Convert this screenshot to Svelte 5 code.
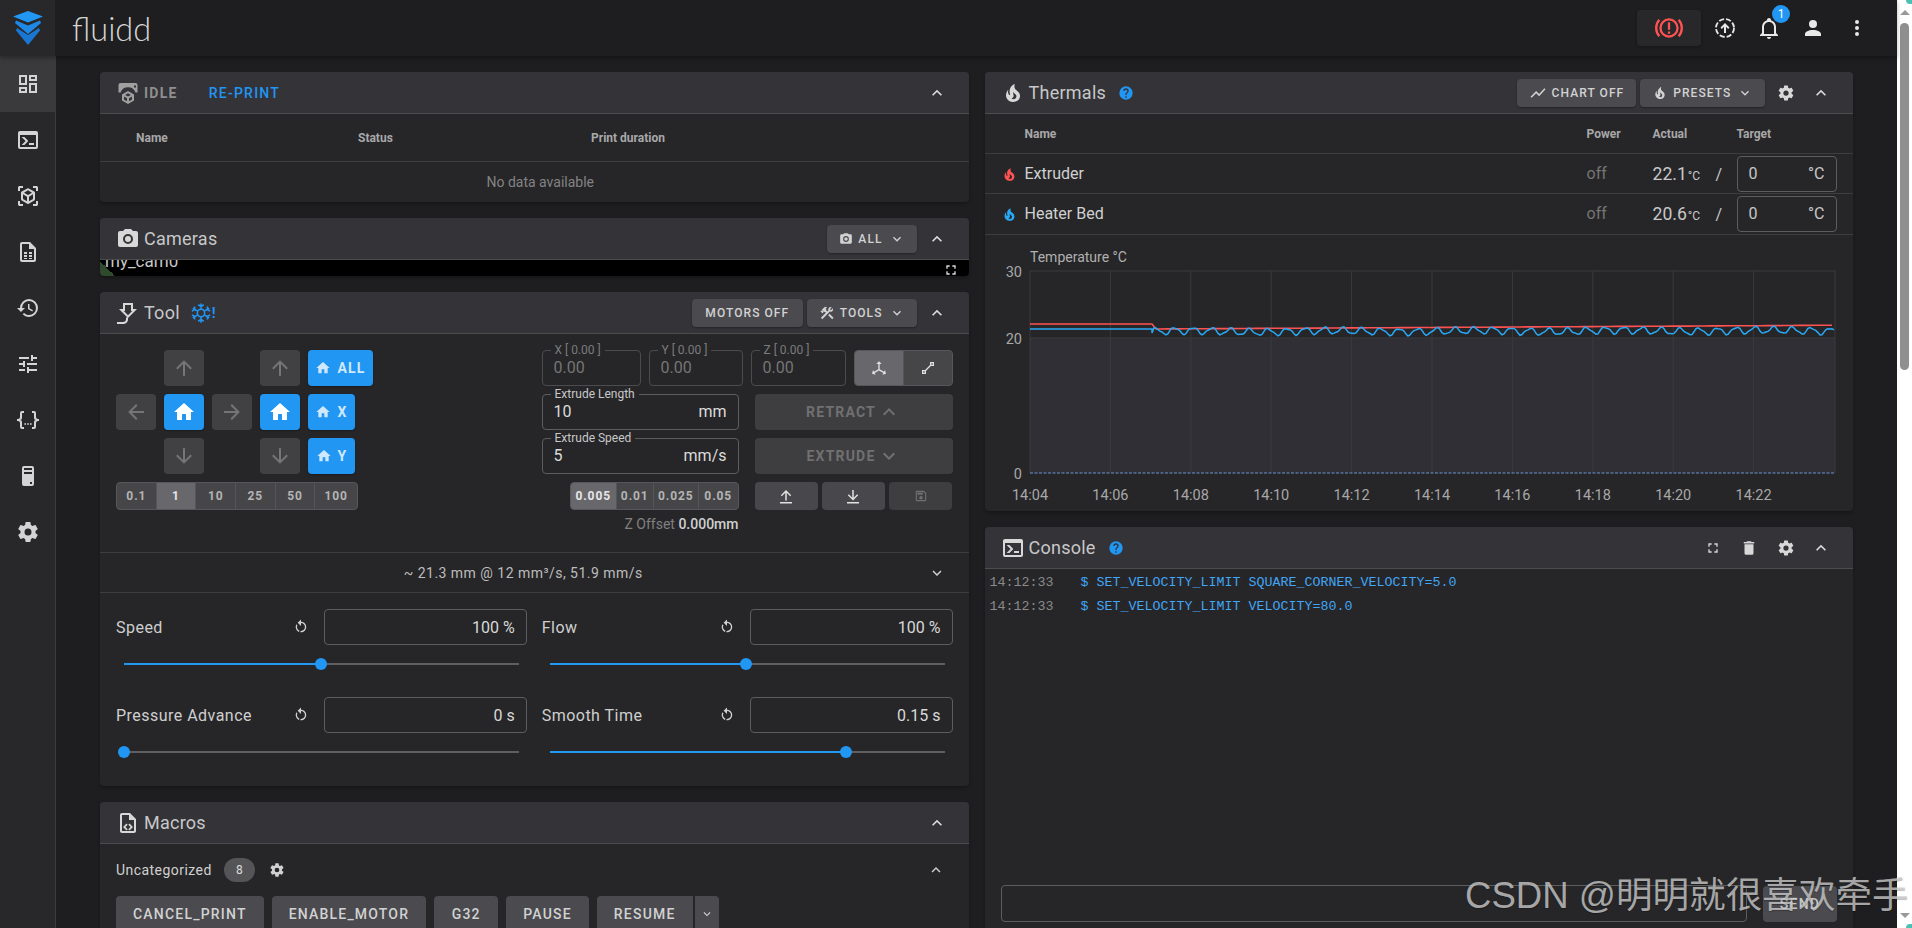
<script>
  const P = {
    dash: 'M19,5V7H15V5H19M9,5V11H5V5H9M19,13V19H15V13H19M9,17V19H5V17H9M21,3H13V9H21V3M11,3H3V13H11V3M21,11H13V21H21V11M11,15H3V21H11V15Z',
    console: 'M20,19V7H4V19H20M20,3A2,2 0 0,1 22,5V19A2,2 0 0,1 20,21H4A2,2 0 0,1 2,19V5C2,3.89 2.9,3 4,3H20M13,17V15H18V17H13M9.58,13L5.57,9H8.4L11.7,12.3C12.09,12.69 12.09,13.33 11.7,13.72L8.42,17H5.59L9.58,13Z',
    cube: 'M17,22V20H20V17H22V20.5C22,20.89 21.84,21.24 21.54,21.54C21.24,21.84 20.89,22 20.5,22H17M7,22H3.5C3.11,22 2.76,21.84 2.46,21.54C2.16,21.24 2,20.89 2,20.5V17H4V20H7V22M17,2H20.5C20.89,2 21.24,2.16 21.54,2.46C21.84,2.76 22,3.11 22,3.5V7H20V4H17V2M7,2V4H4V7H2V3.5C2,3.11 2.16,2.76 2.46,2.46C2.76,2.16 3.11,2 3.5,2H7M13,17.25L17,14.95V10.36L13,12.66V17.25M12,10.92L16,8.63L12,6.28L8,8.63L12,10.92M7,14.95L11,17.25V12.66L7,10.36V14.95M18.23,7.59C18.73,7.91 19,8.34 19,8.91V15.23C19,15.8 18.73,16.23 18.23,16.55L12.75,19.73C12.25,20.05 11.75,20.05 11.25,19.73L5.77,16.55C5.27,16.23 5,15.8 5,15.23V8.91C5,8.34 5.27,7.91 5.77,7.59L11.25,4.41C11.5,4.28 11.75,4.22 12,4.22C12.25,4.22 12.5,4.28 12.75,4.41L18.23,7.59Z',
    file: 'M14,2H6C4.9,2 4,2.9 4,4V20C4,21.1 4.9,22 6,22H18C19.1,22 20,21.1 20,20V8L14,2M18,20H6V4H13V9H18V20M8,12H11V14H8V12M13,12H16V14H13V12M8,15H11V17H8V15M13,15H16V17H13V15M8,18H11V19H8V18M13,18H16V19H13V18Z',
    history: 'M13.5,8H12V13L16.28,15.54L17,14.33L13.5,12.25V8M13,3A9,9 0 0,0 4,12H1L4.96,16.03L9,12H6A7,7 0 0,1 13,5A7,7 0 0,1 20,12A7,7 0 0,1 13,19C11.07,19 9.32,18.21 8.06,16.94L6.64,18.36C8.27,20 10.5,21 13,21A9,9 0 0,0 22,12A9,9 0 0,0 13,3',
    tune: 'M3,17V19H9V17H3M3,5V7H13V5H3M13,21V19H21V17H13V15H11V21H13M7,9V11H3V13H7V15H9V9H7M21,13V11H11V13H21M15,9H17V7H21V5H17V3H15V9Z',
    braces: 'M6,3A2,2 0 0,0 4,5V9A2,2 0 0,1 2,11H1V13H2A2,2 0 0,1 4,15V19A2,2 0 0,0 6,21H8V19H6V14A2,2 0 0,0 4,12A2,2 0 0,0 6,10V5H8V3M18,3A2,2 0 0,1 20,5V9A2,2 0 0,0 22,11H23V13H22A2,2 0 0,0 20,15V19A2,2 0 0,1 18,21H16V19H18V14A2,2 0 0,1 20,12A2,2 0 0,1 18,10V5H16V3H18M8.4,15.2H10V16.8H8.4V15.2M11.2,15.2H12.8V16.8H11.2V15.2M14,15.2H15.6V16.8H14V15.2Z',
    tower: 'M8,2H16A2,2 0 0,1 18,4V20A2,2 0 0,1 16,22H8A2,2 0 0,1 6,20V4A2,2 0 0,1 8,2M8,4V6H16V4H8M16,8H8V10H16V8M16,18H14V20H16V18Z',
    cog: 'M12,15.5A3.5,3.5 0 0,1 8.5,12A3.5,3.5 0 0,1 12,8.5A3.5,3.5 0 0,1 15.5,12A3.5,3.5 0 0,1 12,15.5M19.43,12.97C19.47,12.65 19.5,12.33 19.5,12C19.5,11.67 19.47,11.34 19.43,11L21.54,9.37C21.73,9.22 21.78,8.95 21.66,8.73L19.66,5.27C19.54,5.05 19.27,4.96 19.05,5.05L16.56,6.05C16.04,5.66 15.5,5.32 14.87,5.07L14.5,2.42C14.46,2.18 14.25,2 14,2H10C9.75,2 9.54,2.18 9.5,2.42L9.13,5.07C8.5,5.32 7.96,5.66 7.44,6.05L4.95,5.05C4.73,4.96 4.46,5.05 4.34,5.27L2.34,8.73C2.21,8.95 2.27,9.22 2.46,9.37L4.57,11C4.53,11.34 4.5,11.67 4.5,12C4.5,12.33 4.53,12.65 4.57,12.97L2.46,14.63C2.27,14.78 2.21,15.05 2.34,15.27L4.34,18.73C4.46,18.95 4.73,19.03 4.95,18.95L7.44,17.94C7.96,18.34 8.5,18.68 9.13,18.93L9.5,21.58C9.54,21.82 9.75,22 10,22H14C14.25,22 14.46,21.82 14.5,21.58L14.87,18.93C15.5,18.67 16.04,18.34 16.56,17.94L19.05,18.95C19.27,19.03 19.54,18.95 19.66,18.73L21.66,15.27C21.78,15.05 21.73,14.78 21.54,14.63L19.43,12.97Z',
    up: 'M7.41,15.41L12,10.83L16.59,15.41L18,14L12,8L6,14L7.41,15.41Z',
    down: 'M7.41,8.58L12,13.17L16.59,8.58L18,10L12,16L6,10L7.41,8.58Z',
    camera: 'M4,4H7L9,2H15L17,4H20A2,2 0 0,1 22,6V18A2,2 0 0,1 20,20H4A2,2 0 0,1 2,18V6A2,2 0 0,1 4,4M12,7A5,5 0 0,0 7,12A5,5 0 0,0 12,17A5,5 0 0,0 17,12A5,5 0 0,0 12,7M12,9A3,3 0 0,1 15,12A3,3 0 0,1 12,15A3,3 0 0,1 9,12A3,3 0 0,1 12,9Z',
    fire: 'M17.66 11.2C17.43 10.9 17.15 10.64 16.89 10.38C16.22 9.78 15.46 9.35 14.82 8.72C13.33 7.26 13 4.85 13.95 3C13 3.23 12.17 3.75 11.46 4.32C8.87 6.4 7.85 10.07 9.07 13.22C9.11 13.32 9.15 13.42 9.15 13.55C9.15 13.77 9 13.97 8.8 14.05C8.57 14.15 8.33 14.09 8.14 13.93C8.08 13.88 8.04 13.83 8 13.76C6.87 12.33 6.69 10.28 7.45 8.64C5.78 10 4.87 12.3 5 14.47C5.06 14.97 5.12 15.47 5.29 15.97C5.43 16.57 5.7 17.17 6 17.7C7.08 19.43 8.95 20.67 10.96 20.92C13.1 21.19 15.39 20.8 17.03 19.32C18.86 17.66 19.5 15 18.56 12.72L18.43 12.46C18.22 12 17.66 11.2 17.66 11.2M14.5 17.5C14.22 17.74 13.76 18 13.4 18.1C12.28 18.5 11.16 17.94 10.5 17.28C11.69 17 12.4 16.12 12.61 15.23C12.78 14.43 12.46 13.77 12.33 13C12.21 12.26 12.23 11.63 12.5 10.94C12.69 11.32 12.89 11.7 13.13 12C13.9 13 15.11 13.44 15.37 14.8C15.41 14.94 15.43 15.08 15.43 15.23C15.46 16.05 15.1 16.95 14.5 17.5H14.5Z',
    help: 'M15.07,11.25L14.17,12.17C13.45,12.89 13,13.5 13,15H11V14.5C11,13.39 11.45,12.39 12.17,11.67L13.41,10.41C13.78,10.05 14,9.55 14,9C14,7.89 13.1,7 12,7A2,2 0 0,0 10,9H8A4,4 0 0,1 12,5A4,4 0 0,1 16,9C16,9.88 15.64,10.67 15.07,11.25M13,19H11V17H13M12,2A10,10 0 0,0 2,12A10,10 0 0,0 12,22A10,10 0 0,0 22,12C22,6.47 17.5,2 12,2Z',
    chart: 'M3.5,18.49L9.5,12.48L13.5,16.48L22,6.92L20.59,5.51L13.5,13.48L9.5,9.48L2,16.99L3.5,18.49Z',
    hammer: 'M13.78 15.3L19.78 21.3L21.89 19.14L15.89 13.14L13.78 15.3M17.5 10.1C17.11 10.1 16.69 10.05 16.36 9.91L4.97 21.25L2.86 19.14L10.27 11.74L8.5 9.96L7.78 10.66L6.33 9.25V12.11L5.63 12.81L2.11 9.25L2.81 8.55H5.62L4.22 7.14L7.78 3.58C8.95 2.41 10.83 2.41 12 3.58L9.89 5.74L11.3 7.14L10.59 7.85L12.38 9.63L14.2 7.75C14.06 7.42 14 7 14 6.63C14 4.66 15.56 3.11 17.5 3.11C18.09 3.11 18.61 3.25 19.08 3.53L16.41 6.2L17.91 7.7L20.58 5.03C20.86 5.5 21 6 21 6.63C21 8.55 19.45 10.1 17.5 10.1Z',
    home: 'M10,20V14H14V20H19V12H22L12,3L2,12H5V20H10Z',
    aup: 'M13,20H11V8L5.5,13.5L4.08,12.08L12,4.16L19.92,12.08L18.5,13.5L13,8V20Z',
    adown: 'M11,4H13V16L18.5,10.5L19.92,11.92L12,19.84L4.08,11.92L5.5,10.5L11,16V4Z',
    aleft: 'M20,11V13H8L13.5,18.5L12.08,19.92L4.16,12L12.08,4.08L13.5,5.5L8,11H20Z',
    aright: 'M4,11V13H16L10.5,18.5L11.92,19.92L19.84,12L11.92,4.08L10.5,5.5L16,11H4Z',
    bell: 'M10 21H14C14 22.1 13.1 23 12 23S10 22.1 10 21M21 19V20H3V19L5 17V11C5 7.9 7 5.2 10 4.3V4C10 2.9 10.9 2 12 2S14 2.9 14 4V4.3C17 5.2 19 7.9 19 11V17L21 19M17 11C17 8.2 14.8 6 12 6S7 8.2 7 11V18H17V11Z',
    account: 'M12,4A4,4 0 0,1 16,8A4,4 0 0,1 12,12A4,4 0 0,1 8,8A4,4 0 0,1 12,4M12,14C16.42,14 20,15.79 20,18V20H4V18C4,15.79 7.58,14 12,14Z',
    dots: 'M12,16A2,2 0 0,1 14,18A2,2 0 0,1 12,20A2,2 0 0,1 10,18A2,2 0 0,1 12,16M12,10A2,2 0 0,1 14,12A2,2 0 0,1 12,14A2,2 0 0,1 10,12A2,2 0 0,1 12,10M12,4A2,2 0 0,1 14,6A2,2 0 0,1 12,8A2,2 0 0,1 10,6A2,2 0 0,1 12,4Z',
    reset: 'M12 4C14.1 4 16.1 4.8 17.6 6.3C20.7 9.4 20.7 14.5 17.6 17.6C15.8 19.5 13.3 20.2 10.9 19.9L11.4 17.9C13.1 18.1 14.9 17.5 16.2 16.2C18.5 13.9 18.5 10.1 16.2 7.7C15.1 6.6 13.5 6 12 6V10.6L7 5.6L12 .6V4M6.3 17.6C3.7 15 3.3 11 5.1 7.9L6.6 9.4C5.5 11.6 5.9 14.4 7.8 16.2C8.3 16.7 8.9 17.1 9.6 17.4L9 19.4C8 19 7.1 18.4 6.3 17.6Z',
    full: 'M5,5H10V7H7V10H5V5M14,5H19V10H17V7H14V5M17,14H19V19H14V17H17V14M10,17V19H5V14H7V17H10Z',
    del: 'M19,4H15.5L14.5,3H9.5L8.5,4H5V6H19M6,19A2,2 0 0,0 8,21H16A2,2 0 0,0 18,19V7H6V19Z',
    axis: 'M12,2L16,6H13V13.85L19.53,17.61L21,15.03L22.5,20.5L17,21.96L18.53,19.35L12,15.58L5.47,19.35L7,21.96L1.5,20.5L3,15.03L4.47,17.61L11,13.85V6H8L12,2Z',
    vector: 'M15,3V7.59L7.59,15H3V21H9V16.42L16.42,9H21V3M17,5H19V7H17M5,17H7V19H5',
    upbar: 'M13 7.83V18H11V7.83L6.5 12.33L5.08 10.92L12 4L18.92 10.92L17.5 12.33L13 7.83M4 20H20V22H4Z',
    downbar: 'M11 4H13V14.17L17.5 9.67L18.92 11.08L12 18L5.08 11.08L6.5 9.67L11 14.17V4M4 20H20V22H4Z',
    save: 'M17 3H5C3.89 3 3 3.9 3 5V19C3 20.1 3.89 21 5 21H19C20.1 21 21 20.1 21 19V7L17 3M19 19H5V5H16.17L19 7.83V19M12 12C10.34 12 9 13.34 9 15S10.34 18 12 18 15 16.66 15 15 13.66 12 12 12M6 6H15V10H6V6Z',
    macro: 'M14,2H6C4.9,2 4,2.9 4,4V20C4,21.1 4.9,22 6,22H18C19.1,22 20,21.1 20,20V8L14,2M18,20H6V4H13V9H18V20M10.5,12.5L11.7,13.7L9.4,16L11.7,18.3L10.5,19.5L7,16L10.5,12.5M13.5,12.5L17,16L13.5,19.5L12.3,18.3L14.6,16L12.3,13.7L13.5,12.5Z',
    nozzle: 'M7 2H17V8H21L12 17L3 8H7V2M9 4V10H7.8L12 14.2L16.2 10H15V4H9M1 21H7C8.7 21 10 20 10 18.5V16.5H12V18.5C12 21.2 9.8 23 7 23H1V21Z',
    idle: 'M4.5 2H19.5A2 2 0 0 1 21.5 4V11.5H19.5A8 8 0 0 0 4.5 11.5H2.5V4A2 2 0 0 1 4.5 2ZM18 4.5V6.5H20V4.5ZM12 10L18 13.4V19.6L12 23L6 19.6V13.4L12 10M12 12.3L9.2 13.9L12 15.5L14.8 13.9L12 12.3M8 15.6V18.5L11 20.2V17.3L8 15.6M16 15.6L13 17.3V20.2L16 18.5V15.6Z',
    upload: 'M12 7L7.5 11.5L8.9 12.9L11 10.8V17H13V10.8L15.1 12.9L16.5 11.5L12 7Z',
  };

  const nav = [P.dash, P.console, P.cube, P.file, P.history, P.tune, P.braces, P.tower, P.cog];
  const moveSteps = ['0.1', '1', '10', '25', '50', '100'];
  const zSteps = ['0.005', '0.01', '0.025', '0.05'];
  const sliders = [
    { label: 'Speed', value: '100 %', pct: 49.8 },
    { label: 'Flow', value: '100 %', pct: 49.8 },
    { label: 'Pressure Advance', value: '0 s', pct: 0 },
    { label: 'Smooth Time', value: '0.15 s', pct: 75 },
  ];
  const macros = ['CANCEL_PRINT', 'ENABLE_MOTOR', 'G32', 'PAUSE'];
  const heaters = [
    { cls: 'red', name: 'Extruder', actual: '22.1' },
    { cls: 'sky', name: 'Heater Bed', actual: '20.6' },
  ];

  // Chart space: origin at the chart block (x 985, y 235)
  const X0 = 45, X1 = 850, Y30 = 36, Y20 = 103, Y0 = 238;
  const step = 80.4;
  const times = ['14:04', '14:06', '14:08', '14:10', '14:12', '14:14', '14:16', '14:18', '14:20', '14:22'];
  const gridX = times.map((_, i) => X0 + i * step);

  const jump = 167;
  let blue = `M${X0} 94 H${jump} V98`;
  let red = `M${X0} 89 H${jump} L${jump + 4} 94`;
  for (let x = jump + 2; x <= X1; x += 2) {
    const t = x - jump;
    const w = Math.sin(t / 2.98 + 0.3) * 3.3 + Math.sin(t / 1.37) * 0.9 + Math.sin(t / 23) * 0.7;
    blue += ` L${x} ${(96.5 - t * 0.0013 - w).toFixed(1)}`;
  }
  for (let x = jump + 8; x <= X1; x += 8) {
    red += ` L${x} ${(94 - (x - jump) * 0.0055).toFixed(1)}`;
  }
</script>

{#snippet ic(d, cls = 'i24')}
  <svg class={cls} viewBox="0 0 24 24" aria-hidden="true"><path d={d} /></svg>
{/snippet}

{#snippet field(label, value, unit, cls = '')}
  <div class="field {cls}">
    <span class="legend">{label}</span>
    <span class="val">{value}</span>
    {#if unit}<span class="unit">{unit}</span>{/if}
  </div>
{/snippet}

<div class="root">
  <div class="page">
    <header class="appbar">
      <div class="brand">
        <svg class="logo" viewBox="0 0 30 34" aria-hidden="true">
          <path d="M15 11.5L30 5.6L15 0L0 5.6Z" fill="#2196f3" />
          <path d="M3 9.5L15 14.5L27 9.5L28 12L15 23L2 12Z" fill="#1e88e5" />
          <path d="M4 17L15 24L26 17L27 19.5L15 34L3 19.5Z" fill="#1976d2" />
        </svg>
      </div>
      <div class="wordmark">fluidd</div>
      <div class="bar-actions">
        <button class="brake" aria-label="Emergency stop">
          <svg class="i26" viewBox="0 0 26 26" aria-hidden="true">
            <circle cx="13" cy="13" r="7.4" class="ring" />
            <path d="M4.6 5.8A11 11 0 0 0 4.6 20.2M21.4 5.8A11 11 0 0 1 21.4 20.2" class="ring" />
            <path d="M12 8H14V14.5H12ZM12 16H14V18H12Z" />
          </svg>
        </button>
        <span class="bar-btn">
          <svg class="i24" viewBox="0 0 24 24" aria-hidden="true">
            <circle cx="12" cy="12" r="9" class="dash" />
            <path d={P.upload} />
          </svg>
        </span>
        <span class="bar-btn">
          {@render ic(P.bell)}
          <span class="badge">1</span>
        </span>
        <span class="bar-btn">{@render ic(P.account)}</span>
        <span class="bar-btn">{@render ic(P.dots)}</span>
      </div>
    </header>

    <div class="content">
      <nav class="sidebar">
        {#each nav as d, i}
          <div class="nav-item" class:active={i === 0}>{@render ic(d)}</div>
        {/each}
      </nav>

      <main class="main">
        <section class="col">
          <article class="card">
            <div class="card-head">
              {@render ic(P.idle, 'i24 muted')}
              <span class="idle">IDLE</span>
              <span class="reprint">RE-PRINT</span>
              <span class="spacer"></span>
              {@render ic(P.up, 'i20 chev')}
            </div>
            <div class="job-row job-head"><span>Name</span><span>Status</span><span>Print duration</span></div>
            <div class="empty">No data available</div>
          </article>

          <article class="card">
            <div class="card-head">
              {@render ic(P.camera, 'i24')}
              <span class="title">Cameras</span>
              <span class="spacer"></span>
              <button class="btn small">{@render ic(P.camera, 'i14')}ALL{@render ic(P.down, 'i16 tail')}</button>
              {@render ic(P.up, 'i20 chev')}
            </div>
            <div class="cam">
              <span class="cam-name">my_cam0</span>
              <span class="cam-corner"></span>
              {@render ic(P.full, 'i16 cam-full')}
            </div>
          </article>

          <article class="card">
            <div class="card-head">
              {@render ic(P.nozzle, 'i24')}
              <span class="title">Tool</span>
              <span class="snow">
                <svg class="i22" viewBox="0 0 24 24" aria-hidden="true">
                  <g class="flake">
                    <circle cx="12" cy="12" r="4" />
                    <path d="M12 8V1.5M12 16V22.5M8.5 10L3 6.8M15.5 14L21 17.2M8.5 14L3 17.2M15.5 10L21 6.8M9 3L12 5L15 3M9 21L12 19L15 21M2 10L5 8.5L5 5M22 14L19 15.5L19 19M2 14L5 15.5L5 19M22 10L19 8.5L19 5" />
                  </g>
                </svg><b>!</b>
              </span>
              <span class="spacer"></span>
              <button class="btn pad">MOTORS OFF</button>
              <button class="btn">{@render ic(P.hammer, 'i16')}TOOLS{@render ic(P.down, 'i16 tail')}</button>
              {@render ic(P.up, 'i20 chev')}
            </div>

            <div class="tool-top">
              <div>
                <div class="jog">
                  <span></span>
                  <span class="jbtn off">{@render ic(P.aup)}</span>
                  <span></span>
                  <span class="jbtn off">{@render ic(P.aup)}</span>
                  <span class="jbtn blue wide">{@render ic(P.home, 'i16')}ALL</span>

                  <span class="jbtn off">{@render ic(P.aleft)}</span>
                  <span class="jbtn blue">{@render ic(P.home)}</span>
                  <span class="jbtn off">{@render ic(P.aright)}</span>
                  <span class="jbtn blue">{@render ic(P.home)}</span>
                  <span class="jbtn blue mid">{@render ic(P.home, 'i16')}X</span>

                  <span></span>
                  <span class="jbtn off">{@render ic(P.adown)}</span>
                  <span></span>
                  <span class="jbtn off">{@render ic(P.adown)}</span>
                  <span class="jbtn blue mid">{@render ic(P.home, 'i16')}Y</span>
                </div>
                <div class="group move">
                  {#each moveSteps as s, i}
                    <span class="cell" class:on={i === 1}>{s}</span>
                  {/each}
                </div>
              </div>

              <div class="ctl">
                <div class="pos-row">
                  {@render field('X [ 0.00 ]', '0.00', '', 'pos px')}
                  {@render field('Y [ 0.00 ]', '0.00', '', 'pos py')}
                  {@render field('Z [ 0.00 ]', '0.00', '', 'pos pz')}
                  <div class="group toggle">
                    <span class="cell on">{@render ic(P.axis, 'i16')}</span>
                    <span class="cell">{@render ic(P.vector, 'i16')}</span>
                  </div>
                </div>
                <div class="ext-row">
                  {@render field('Extrude Length', '10', 'mm')}
                  <span class="wide-off">RETRACT{@render ic(P.up)}</span>
                </div>
                <div class="ext-row">
                  {@render field('Extrude Speed', '5', 'mm/s')}
                  <span class="wide-off">EXTRUDE{@render ic(P.down)}</span>
                </div>
                <div class="ext-row short">
                  <div class="group zstep">
                    {#each zSteps as s, i}
                      <span class="cell" class:on={i === 0}>{s}</span>
                    {/each}
                  </div>
                  <div class="z-btns">
                    <span class="zb">{@render ic(P.upbar, 'i18')}</span>
                    <span class="zb">{@render ic(P.downbar, 'i18')}</span>
                    <span class="zb dim">{@render ic(P.save, 'i14')}</span>
                  </div>
                </div>
                <div class="zoffset"><span>Z Offset</span> <b>0.000mm</b></div>
              </div>
            </div>

            <div class="stats">
              <span>~ 21.3 mm @ 12 mm³/s, 51.9 mm/s</span>
              {@render ic(P.down, 'i18 stats-chev')}
            </div>

            <div class="sliders">
              {#each sliders as s}
                <div class="sl">
                  <div class="sl-top">
                    <span class="sl-label">{s.label}</span>
                    {@render ic(P.reset, 'i16')}
                    <span class="sl-input">{s.value}</span>
                  </div>
                  <div class="track">
                    <span class="fill" style="width:{s.pct}%"></span>
                    <span class="thumb" style="left:{s.pct}%"></span>
                  </div>
                </div>
              {/each}
            </div>
          </article>

          <article class="card">
            <div class="card-head">
              {@render ic(P.macro, 'i24')}
              <span class="title">Macros</span>
              <span class="spacer"></span>
              {@render ic(P.up, 'i20 chev')}
            </div>
            <div class="mac-head">
              <span class="mac-title">Uncategorized</span>
              <span class="chip">8</span>
              {@render ic(P.cog, 'i16')}
              <span class="spacer"></span>
              {@render ic(P.up, 'i18 mac-chev')}
            </div>
            <div class="mac-list">
              {#each macros as m}<button class="mac">{m}</button>{/each}
              <span class="split"><button class="mac">RESUME</button><button class="mac caret">{@render ic(P.down, 'i14')}</button></span>
            </div>
          </article>
        </section>

        <section class="col">
          <article class="card">
            <div class="card-head">
              {@render ic(P.fire, 'i24')}
              <span class="title">Thermals</span>
              <span class="help">{@render ic(P.help, 'i16')}</span>
              <span class="spacer"></span>
              <button class="btn">{@render ic(P.chart, 'i18')}CHART OFF</button>
              <button class="btn">{@render ic(P.fire, 'i16')}PRESETS{@render ic(P.down, 'i16 tail')}</button>
              <span class="head-icon">{@render ic(P.cog, 'i18')}</span>
              {@render ic(P.up, 'i20 chev')}
            </div>
            <div class="th-row th-head">
              <span></span><span>Name</span><span>Power</span><span>Actual</span><span>Target</span>
            </div>
            {#each heaters as h, i}
              <div class="th-row" class:tall={i === 1}>
                <span class="fire {h.cls}">{@render ic(P.fire, 'i14')}</span>
                <span class="h-name">{h.name}</span>
                <span class="h-off">off</span>
                <span class="h-actual">{h.actual}<small>°C</small><i>/</i></span>
                <span class="h-target"><em>0</em><em>°C</em></span>
              </div>
            {/each}
            <div class="chart">
              <svg class="chart-svg" viewBox="0 0 868 276" aria-label="Temperature chart">
                <rect x={X0} y={Y20} width={X1 - X0} height={Y0 - Y20} class="area" />
                <path d="M{X0} {Y30}H{X1}M{X0} {Y20}H{X1}" class="grid" />
                {#each gridX as x}<path d="M{x} {Y30}V{Y0}" class="grid" />{/each}
                <path d="M{X1} {Y30}V{Y0}" class="grid" />
                <text x="45" y="27" class="ttl">Temperature °C</text>
                <text x="37" y="42" class="lbl" text-anchor="end">30</text>
                <text x="37" y="109" class="lbl" text-anchor="end">20</text>
                <text x="37" y="244" class="lbl" text-anchor="end">0</text>
                {#each times as t, i}
                  <text x={gridX[i]} y="265" class="lbl" text-anchor="middle">{t}</text>
                {/each}
                <path d={red} class="l-red" />
                <path d={blue} class="l-blue" />
                <path d="M{X0} {Y0}H{X1}" class="l-zero" />
              </svg>
            </div>
          </article>

          <article class="card console">
            <div class="card-head">
              {@render ic(P.console, 'i24')}
              <span class="title">Console</span>
              <span class="help">{@render ic(P.help, 'i16')}</span>
              <span class="spacer"></span>
              <span class="head-icon">{@render ic(P.full, 'i16')}</span>
              <span class="head-icon">{@render ic(P.del, 'i18')}</span>
              <span class="head-icon">{@render ic(P.cog, 'i18')}</span>
              {@render ic(P.up, 'i20 chev')}
            </div>
            <div class="log">
              <div class="log-row"><span>14:12:33</span><b>$ SET_VELOCITY_LIMIT SQUARE_CORNER_VELOCITY=5.0</b></div>
              <div class="log-row"><span>14:12:33</span><b>$ SET_VELOCITY_LIMIT VELOCITY=80.0</b></div>
            </div>
            <div class="send-row">
              <div class="cmd"></div>
              <button class="send">SEND</button>
            </div>
          </article>
        </section>
      </main>
    </div>
  </div>

  <aside class="scroll">
    <span class="sc-up"></span>
    <span class="sc-thumb"></span>
    <span class="spacer"></span>
    <span class="sc-down"></span>
  </aside>

  <div class="watermark">CSDN @明明就很喜欢牵手</div>
  <span class="corner tl"></span>
  <span class="corner tr"></span>
  <span class="corner br"></span>
</div>

<style>
  :global(body) { margin: 0; background: #1e1e20; }
  .root {
    width: 1912px; height: 928px; display: flex; overflow: hidden; position: relative;
    background: #1e1e20; color: #fff;
    font-family: Roboto, "Noto Sans", sans-serif; font-size: 14px;
  }
  .page { width: 1897px; display: flex; flex-direction: column; }
  svg { fill: currentColor; display: block; flex: none; }
  button { font-family: inherit; border: 0; padding: 0; color: inherit; }
  .spacer { flex: 1; }
  .i14 { width: 14px; height: 14px; }
  .i16 { width: 16px; height: 16px; }
  .i18 { width: 18px; height: 18px; }
  .i20 { width: 20px; height: 20px; }
  .i22 { width: 22px; height: 22px; }
  .i24 { width: 24px; height: 24px; }
  .i26 { width: 30px; height: 30px; }

  .appbar {
    height: 56px; flex: none; display: flex; align-items: center; background: #1e1e20;
    box-shadow: 0 2px 4px rgba(0, 0, 0, .3); position: relative; z-index: 2;
  }
  .brand { width: 55px; height: 56px; background: #28282b; display: flex; align-items: center; justify-content: center; }
  .logo { width: 30px; height: 34px; }
  .wordmark { margin-left: 17px; font-family: Lato, sans-serif; font-weight: 300; font-size: 32.5px; color: #d4d4d4; }
  .bar-actions { margin-left: auto; display: flex; align-items: center; padding-right: 18px; color: #e8e8e8; }
  .brake { width: 64px; height: 36px; background: #28282b; border-radius: 4px; color: #ff5252; display: flex; align-items: center; justify-content: center; margin-right: 2px; box-shadow: 0 1px 3px rgba(0,0,0,.3); }
  .ring { fill: none; stroke: currentColor; stroke-width: 2; }
  .dash { fill: none; stroke: currentColor; stroke-width: 1.8; stroke-dasharray: 5.2 2; }
  .bar-btn { width: 44px; height: 44px; display: flex; align-items: center; justify-content: center; position: relative; }
  .badge { position: absolute; left: 25px; top: -1px; width: 18px; height: 18px; border-radius: 50%; background: #2196f3; font-size: 12px; line-height: 18px; text-align: center; color: #fff; }

  .content { flex: 1; display: flex; min-height: 0; }
  .sidebar { width: 55px; flex: none; background: #28282b; border-right: 1px solid #3b3b3e; }
  .nav-item { height: 56px; display: flex; align-items: center; justify-content: center; color: #d4d4d4; }
  .nav-item.active { background: #3a3a3d; }
  .main { flex: 1; display: grid; grid-template-columns: 1fr 1fr; gap: 16px; padding: 16px 44px 0; min-width: 0; min-height: 0; }
  .col { display: flex; flex-direction: column; gap: 16px; min-width: 0; min-height: 0; }

  .card { background: #262628; border-radius: 4px; box-shadow: 0 2px 3px rgba(0, 0, 0, .25); flex: none; }
  .card-head {
    height: 42px; box-sizing: border-box; display: flex; align-items: center; padding: 0 16px;
    background: #333338; border-bottom: 1px solid #4c4c4f; border-radius: 4px 4px 0 0; color: #d8d8d8;
  }
  .muted { color: #a0a0a0; }
  .title { margin-left: 4px; font-size: 18px; font-weight: 400; letter-spacing: .25px; color: #c8c8c8; }
  .idle { margin-left: 4px; font-weight: 700; font-size: 14px; letter-spacing: 1.25px; color: #8f8f8f; }
  .reprint { margin-left: 31px; font-weight: 500; font-size: 14px; letter-spacing: 1.25px; color: #2196f3; }
  .chev { color: #dcdcdc; margin: 0 6px 0 10px; }
  .btn {
    height: 28px; display: inline-flex; align-items: center; gap: 5px; padding: 0 12px; margin-left: 4px;
    background: #4a4a4f; border-radius: 4px; font-size: 12px; font-weight: 500; letter-spacing: 1.07px; color: #d2d2d2;
    box-shadow: 0 1px 2px rgba(0, 0, 0, .3);
  }
  .btn.pad { padding: 0 13.5px; }
  .tail { margin-left: 1px; }
  .head-icon { width: 36.6px; display: flex; justify-content: center; margin-right: -3px; color: #d8d8d8; }
  .head-icon:has(+ .head-icon) { margin-right: 0; }
  .btn + .head-icon { margin-left: 2px; }

  .job-row { display: grid; grid-template-columns: 222px 233px 1fr; padding-left: 36px; }
  .job-head { height: 48px; box-sizing: border-box; align-items: center; border-bottom: 1px solid #3d3d40; font-size: 12px; font-weight: 700; color: #a8a8a8; }
  .empty { height: 40px; display: flex; align-items: center; justify-content: center; padding-left: 12px; color: #838383; font-size: 14px; }

  .cam { height: 16px; background: #000; overflow: hidden; position: relative; border-radius: 0 0 4px 4px; }
  .cam-name { position: absolute; left: 5px; top: -9px; font-size: 17px; color: #c8c8c8; }
  .cam-corner { position: absolute; left: 0; bottom: 0; width: 15px; height: 15px; background: linear-gradient(45deg, #2f4a2c 50%, transparent 50%); }
  :global(.cam-full) { position: absolute; right: 10px; top: 2px; color: #ddd; }

  .tool-top { display: grid; grid-template-columns: 1fr 1fr; gap: 15px; padding: 16px 16px 0; height: 202px; box-sizing: content-box; }
  .jog { display: grid; grid-template-columns: repeat(4, 40px) auto; grid-auto-rows: 36px; gap: 8px; justify-items: start; }
  .jbtn { width: 40px; height: 36px; border-radius: 4px; display: flex; align-items: center; justify-content: center; box-sizing: border-box; }
  .jbtn.off { background: #414143; color: #757575; }
  .jbtn.blue { background: #2196f3; color: #fff; font-weight: 700; font-size: 14px; letter-spacing: 1.2px; box-shadow: 0 1px 2px rgba(0, 0, 0, .3); }
  .jbtn.wide, .jbtn.mid { color: #cfe8fc; gap: 6px; }
  .jbtn.wide { width: 65px; }
  .jbtn.mid { width: 47px; }

  .group { display: flex; height: 28px; box-sizing: border-box; border: 1px solid #57575b; border-radius: 4px; overflow: hidden; background: #464649; }
  .cell { display: flex; align-items: center; justify-content: center; font-size: 12px; font-weight: 700; letter-spacing: .9px; color: #b4b4b4; border-right: 1px solid #55555a; box-sizing: border-box; height: 100%; }
  .cell:last-child { border-right: 0; }
  .cell.on { background: #68686c; color: #e6e6e6; }
  .move { width: 242px; margin-top: 8px; }
  .move .cell { width: 40px; }
  .move .cell:last-child { width: 42px; }

  .ctl { display: flex; flex-direction: column; gap: 8px; }
  .pos-row { display: flex; gap: 8px; height: 36px; }
  .field { height: 36px; width: 197px; box-sizing: border-box; border: 1px solid #5d5d60; border-radius: 4px; position: relative; display: flex; align-items: center; justify-content: space-between; padding: 0 11px 1px; font-size: 16px; color: #dcdcdc; flex: none; }
  .legend { position: absolute; left: 8px; top: -7px; padding: 0 4px; background: #262628; font-size: 12px; line-height: 13px; color: #c8c8c8; white-space: nowrap; }
  .pos { color: #757575; border-color: #4c4c4f; }
  .pos .legend { color: #7b7b7b; }
  .px { width: 99px; }
  .py { width: 94px; }
  .pz { width: 95px; }
  .toggle { width: 99px; height: 36px; margin-left: 0; flex: none; }
  .toggle .cell { flex: 1; color: #e0e0e0; }
  .ext-row { display: flex; gap: 16px; }
  .wide-off { width: 198px; height: 36px; border-radius: 4px; background: #3e3e40; color: #707070; display: flex; align-items: center; justify-content: center; gap: 1px; font-size: 14px; font-weight: 700; letter-spacing: 1.2px; }
  .short { height: 28px; }
  .zstep { margin-left: 28px; width: 169px; }
  .zstep .cell:nth-child(1) { width: 47px; }
  .zstep .cell:nth-child(2) { width: 37px; }
  .zstep .cell:nth-child(3) { width: 46px; }
  .zstep .cell:nth-child(4) { width: 39px; }
  .z-btns { display: flex; gap: 4px; width: 198px; }
  .zb { flex: 1; height: 28px; border-radius: 4px; background: #48484c; display: flex; align-items: center; justify-content: center; color: #e2e2e2; }
  .zb.dim { background: #3e3e40; color: #6f6f6f; }
  .zoffset { width: 197px; text-align: right; font-size: 14px; color: #808080; margin-top: -2px; }
  .zoffset b { font-weight: 500; color: #d0d0d0; }

  .stats { height: 41px; box-sizing: border-box; border-top: 1px solid #3d3d40; border-bottom: 1px solid #3d3d40; display: flex; align-items: center; justify-content: center; padding-right: 22px; position: relative; color: #bdbdbd; font-size: 14px; letter-spacing: .47px; }
  :global(.stats-chev) { position: absolute; right: 23px; color: #cfcfcf; }
  .sliders { display: grid; grid-template-columns: 1fr 1fr; column-gap: 15px; padding: 16px 16px 0; height: 193px; box-sizing: border-box; grid-auto-rows: 88px; }
  .sl-top { display: flex; align-items: center; height: 36px; color: #d0d0d0; }
  .sl-label { flex: 1; font-size: 16px; letter-spacing: .47px; color: #cfcfcf; }
  .sl-input { width: 203px; height: 36px; box-sizing: border-box; margin-left: 15px; border: 1px solid #5d5d60; border-radius: 4px; display: flex; align-items: center; justify-content: flex-end; padding-right: 11px; font-size: 16px; color: #d8d8d8; }
  .track { margin: 18px 8px 0; height: 2px; background: #5f5f62; position: relative; }
  .fill { position: absolute; left: 0; top: 0; height: 2px; background: #2196f3; }
  .thumb { position: absolute; top: -5px; width: 12px; height: 12px; margin-left: -6px; border-radius: 50%; background: #2196f3; }

  .mac-head { display: flex; align-items: center; height: 52px; padding: 0 16px; font-size: 14px; color: #d0d0d0; box-sizing: border-box; }
  .mac-title { letter-spacing: .45px; }
  .chip { width: 31px; height: 24px; border-radius: 12px; background: #555558; margin: 0 14px 0 12px; display: flex; align-items: center; justify-content: center; font-size: 12px; color: #ddd; }
  :global(.mac-chev) { margin-right: 8px; color: #d0d0d0; }
  .mac-list { display: flex; gap: 8px; padding: 0 16px; height: 40px; }
  .mac { height: 36px; min-width: 64px; padding: 0 17px; background: #4a4a4f; border-radius: 4px; font-size: 14px; font-weight: 500; letter-spacing: 1.2px; color: #d2d2d2; }
  .split { display: flex; gap: 2px; }
  .split .mac:first-child { border-radius: 4px 0 0 4px; }
  .caret { width: 24px; min-width: 24px; padding: 0; border-radius: 0 4px 4px 0; display: flex; align-items: center; justify-content: center; }

  .help { margin-left: 12px; color: #2196f3; }
  .th-row { display: grid; grid-template-columns: 40px 562px 66px 84px 100px; align-items: center; height: 40px; box-sizing: border-box; border-bottom: 1px solid #3d3d40; }
  .th-row.tall { height: 41px; padding-bottom: 1px; }
  .th-head { font-size: 12px; font-weight: 700; color: #a8a8a8; }
  .fire { display: flex; justify-content: flex-end; padding-right: 7px; }
  .fire :global(svg) { width: 17px; height: 17px; margin-top: 2px; }
  .fire.red { color: #ff5252; }
  .fire.sky { color: #29a9f5; }
  .h-name { font-size: 16px; color: #d0d0d0; }
  .h-off { font-size: 16px; color: #747474; }
  .h-actual { font-size: 17.6px; color: #c8c8c8; position: relative; white-space: nowrap; }
  .h-actual small { font-size: 12px; margin-left: 1px; }
  .h-actual i { position: absolute; left: 63px; font-style: normal; font-size: 16px; top: 1px; }
  .h-target { width: 100px; height: 36px; box-sizing: border-box; border: 1px solid #5d5d60; border-radius: 4px; display: flex; align-items: center; justify-content: space-between; padding: 0 11px; font-size: 16px; color: #c8c8c8; }
  .h-target em { font-style: normal; }

  .chart { height: 276px; }
  .chart-svg { width: 868px; height: 276px; }
  .area { fill: #302f35; }
  .grid { stroke: #3a3a3d; stroke-width: 1; fill: none; }
  .ttl { fill: #b0b0b0; font-size: 14px; }
  .lbl { fill: #a8a8a8; font-size: 14.5px; }
  .l-red { fill: none; stroke: #ff5252; stroke-width: 1.6; }
  .l-blue { fill: none; stroke: #29a9f5; stroke-width: 1.5; }
  .l-zero { fill: none; stroke: #6a93cf; stroke-width: 1.2; stroke-dasharray: 3 1.5; }

  .console { flex: 1; display: flex; flex-direction: column; min-height: 0; border-radius: 4px 4px 0 0; }
  .log { flex: 1; padding-top: 2px; font-family: "Liberation Mono", monospace; font-size: 13.33px; line-height: 24px; }
  .log-row { display: flex; padding-left: 5px; }
  .log-row span { width: 91px; flex: none; color: #8a8a8a; }
  .log-row b { font-weight: 400; color: #42a5f5; white-space: pre; }
  .send-row { display: flex; gap: 16px; align-items: flex-end; padding: 0 16px 6px; }
  .cmd { flex: 1; height: 37px; box-sizing: border-box; border: 1px solid #5d5d60; border-radius: 4px; }
  .send { width: 74px; height: 36px; border-radius: 4px; background: #4a4a4f; font-size: 14px; font-weight: 500; letter-spacing: 1.2px; color: #c8c8c8; }

  .snow { display: inline-flex; align-items: center; margin-left: 10px; color: #2196f3; }
  .flake { fill: none; stroke: currentColor; stroke-width: 1.7; }
  .snow b { font-size: 14px; font-weight: 700; margin-left: 0; }

  .scroll { width: 15px; background: #fff; display: flex; flex-direction: column; align-items: center; flex: none; }
  .sc-up { margin-top: 10px; width: 0; height: 0; border: 5px solid transparent; border-top: 0; border-bottom-color: #999; }
  .sc-thumb { margin-top: 8px; width: 9px; height: 347px; background: #8f8f8f; border-radius: 5px; }
  .sc-down { margin-bottom: 10px; width: 0; height: 0; border: 5px solid transparent; border-bottom: 0; border-top-color: #999; }

  .watermark {
    position: absolute; left: 1465px; top: 873px; font-family: "Liberation Sans", "Noto Sans CJK SC", sans-serif;
    font-size: 36.6px; line-height: 46px; color: rgba(205, 205, 205, .78); white-space: nowrap; text-shadow: 0 1px 1px rgba(0, 0, 0, .25);
  }
  .corner { position: absolute; width: 6px; height: 4px; background: #4dbfb4; }
  .tl { left: 0; top: 0; border-bottom-right-radius: 6px; }
  .tr { right: 0; top: 0; border-bottom-left-radius: 6px; }
  .br { right: 0; bottom: 0; border-top-left-radius: 6px; }
</style>
